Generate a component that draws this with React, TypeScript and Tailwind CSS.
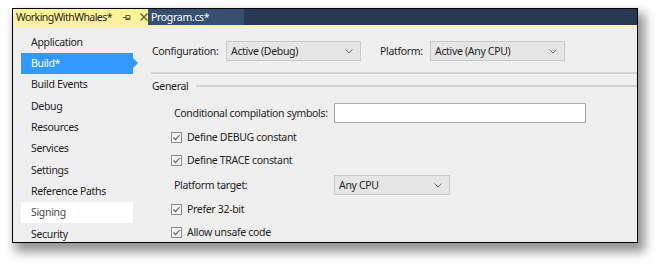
import React from "react";

const navItems = [
  "Application",
  "Build*",
  "Build Events",
  "Debug",
  "Resources",
  "Services",
  "Settings",
  "Reference Paths",
  "Signing",
  "Security",
];

function Chevron() {
  return (
    <svg width="8" height="5" viewBox="0 0 8 5" className="shrink-0">
      <path d="M0.5 0.5 L4 4 L7.5 0.5" fill="none" stroke="#6d6d6d" strokeWidth="1" />
    </svg>
  );
}

function Dropdown({ text, w }: { text: string; w: string }) {
  return (
    <div
      className={`${w} h-[20px] shrink-0 flex items-center justify-between pl-[4px] pr-[7px] bg-[#e6e6e6] border border-[#c9c9c9]`}
    >
      <span>{text}</span>
      <Chevron />
    </div>
  );
}

function Check({ label }: { label: string }) {
  return (
    <div className="h-[23px] flex items-center pl-[30px]">
      <div className="w-[11px] h-[11px] border border-[#8d8d8d] bg-[#f4f4f4] flex items-center justify-center">
        <svg width="9" height="9" viewBox="0 0 9 9">
          <path d="M1.5 4.5 L3.6 6.6 L7.6 2" fill="none" stroke="#5a5a5a" strokeWidth="1.1" />
        </svg>
      </div>
      <span className="ml-[5px]">{label}</span>
    </div>
  );
}

function Pin() {
  return (
    <svg width="8" height="7" viewBox="0 0 8 7" className="shrink-0">
      <path d="M0 3.5 H3 M3 1 V6 M3 1.5 H7 V5.5 H3 M3 4.3 H7" fill="none" stroke="#5e5a3a" strokeWidth="1" />
    </svg>
  );
}

export default function App() {
  return (
    <div
      className="w-[670px] h-[278px] bg-white pt-[8px] pl-[12px] text-[#1e1e1e] text-[10.5px] tracking-[-0.32px] leading-none whitespace-nowrap"
      style={{ fontFamily: '"Noto Sans", "Open Sans", sans-serif' }}
    >
      <div className="w-[626px] h-[235px] border border-black bg-[#efefef] flex flex-col shadow-[5px_7px_10px_2px_rgba(0,0,0,0.42)] overflow-hidden">
        {/* tab bar */}
        <div className="h-[16px] bg-[#293955] flex shrink-0">
          <div className="w-[135px] bg-[#fff29d] flex items-center pl-[3px] text-[#1e1e1e]">
            <span className="w-[108px] text-[10.5px] tracking-[-0.55px]">WorkingWithWhales*</span>
            <Pin />
            <svg width="8" height="8" viewBox="0 0 8 8" className="ml-[9px]">
              <path d="M0.5 0.5 L7.5 7.5 M7.5 0.5 L0.5 7.5" stroke="#5e5a3a" strokeWidth="1.2" />
            </svg>
          </div>
          <div className="w-[96px] bg-[#364e6f] flex items-center pl-[3px] text-white">Program.cs*</div>
        </div>
        <div className="h-[2px] bg-[#fff29d] shrink-0" />
        <div className="flex flex-1">
          {/* nav */}
          <div className="w-[128px] pl-[8px] pt-[4.5px] shrink-0">
            {navItems.map((it) => {
              const sel = it === "Build*";
              const sign = it === "Signing";
              return (
                <div
                  key={it}
                  className={`relative w-[112px] h-[21.3px] flex items-center pl-[10px] ${
                    sel ? "bg-[#3399ff] text-white" : sign ? "bg-white text-[#4a4a4a]" : ""
                  }`}
                >
                  {it}
                  {sel && (
                    <div className="absolute right-[-5px] top-[5.5px] w-0 h-0 border-t-[5px] border-b-[5px] border-l-[5px] border-t-transparent border-b-transparent border-l-[#3399ff]" />
                  )}
                </div>
              );
            })}
          </div>
          {/* content */}
          <div className="flex-1 pt-[14px]">
            <div className="flex items-center pl-[11px] h-[20px]">
              <span className="w-[74px] shrink-0">Configuration:</span>
              <Dropdown text="Active (Debug)" w="w-[135px]" />
              <span className="ml-[19px] w-[50px] shrink-0">Platform:</span>
              <Dropdown text="Active (Any CPU)" w="w-[135px]" />
            </div>
            <div className="ml-[10px] mt-[11px] h-[2px] bg-[#d2d2d2]" />
            <div className="flex items-center pl-[11px] h-[22px] mt-[1px]">
              <span>General</span>
              <div className="flex-1 ml-[8px] h-[2px] bg-[#d2d2d2]" />
            </div>
            <div className="flex items-center pl-[33px] h-[20px] mt-[6px]">
              <span className="w-[160px] shrink-0">Conditional compilation symbols:</span>
              <div className="w-[252px] h-[20px] shrink-0 bg-white border border-[#ababab]" />
            </div>
            <div className="mt-[2.5px]">
              <Check label="Define DEBUG constant" />
              <Check label="Define TRACE constant" />
            </div>
            <div className="flex items-center pl-[33px] h-[20px] mt-[3.5px]">
              <span className="w-[160px] shrink-0">Platform target:</span>
              <Dropdown text="Any CPU" w="w-[116px]" />
            </div>
            <div className="mt-[2.5px]">
              <Check label="Prefer 32-bit" />
              <Check label="Allow unsafe code" />
            </div>
          </div>
        </div>
      </div>
    </div>
  );
}
